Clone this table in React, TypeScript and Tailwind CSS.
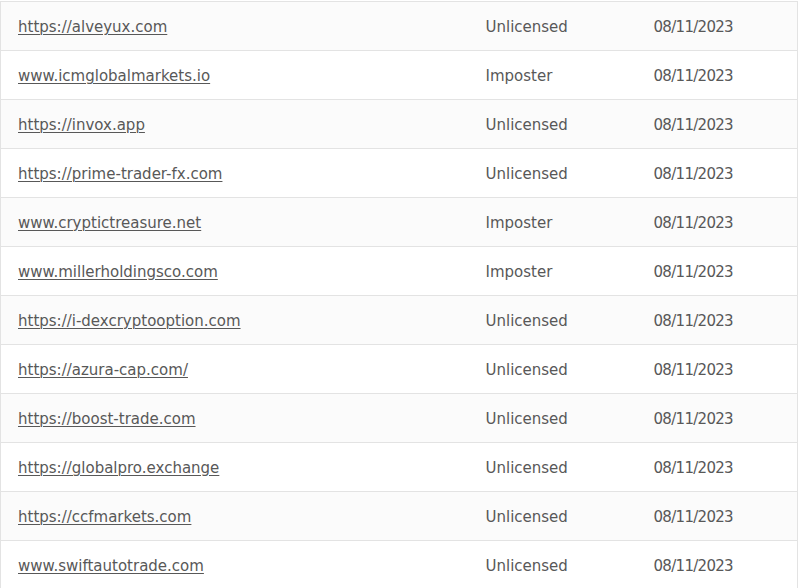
const rows = [
  { site: 'https://alveyux.com', type: 'Unlicensed' },
  { site: 'www.icmglobalmarkets.io', type: 'Imposter' },
  { site: 'https://invox.app', type: 'Unlicensed' },
  { site: 'https://prime-trader-fx.com', type: 'Unlicensed' },
  { site: 'www.cryptictreasure.net', type: 'Imposter' },
  { site: 'www.millerholdingsco.com', type: 'Imposter' },
  { site: 'https://i-dexcryptooption.com', type: 'Unlicensed' },
  { site: 'https://azura-cap.com/', type: 'Unlicensed' },
  { site: 'https://boost-trade.com', type: 'Unlicensed' },
  { site: 'https://globalpro.exchange', type: 'Unlicensed' },
  { site: 'https://ccfmarkets.com', type: 'Unlicensed' },
  { site: 'www.swiftautotrade.com', type: 'Unlicensed' },
];

export default function App() {
  return (
    <div className="w-[800px] h-[588px] overflow-hidden bg-white pt-px">
      <table
        className="w-[798px] table-fixed border-collapse text-[15px] text-[#585858] border-l border-r border-[#e3e3e3]"
        style={{ fontFamily: '"DejaVu Sans", sans-serif' }}
      >
        <colgroup>
          <col className="w-[467px]" />
          <col className="w-[168px]" />
          <col />
        </colgroup>
        <tbody>
          {rows.map((r, i) => (
            <tr
              key={r.site}
              className={`h-[49px] border-t border-[#e3e3e3] ${i % 2 === 0 ? 'bg-[#fbfbfb]' : 'bg-white'}`}
            >
              <td className="pl-[17px] pt-[2px]">
                <a href="#" className="underline underline-offset-2 decoration-1 text-[#585858]">
                  {r.site}
                </a>
              </td>
              <td className="pl-[18px] pt-[2px]">{r.type}</td>
              <td className="pl-[18px] pt-[2px] tracking-[-0.7px]">08/11/2023</td>
            </tr>
          ))}
        </tbody>
      </table>
    </div>
  );
}
